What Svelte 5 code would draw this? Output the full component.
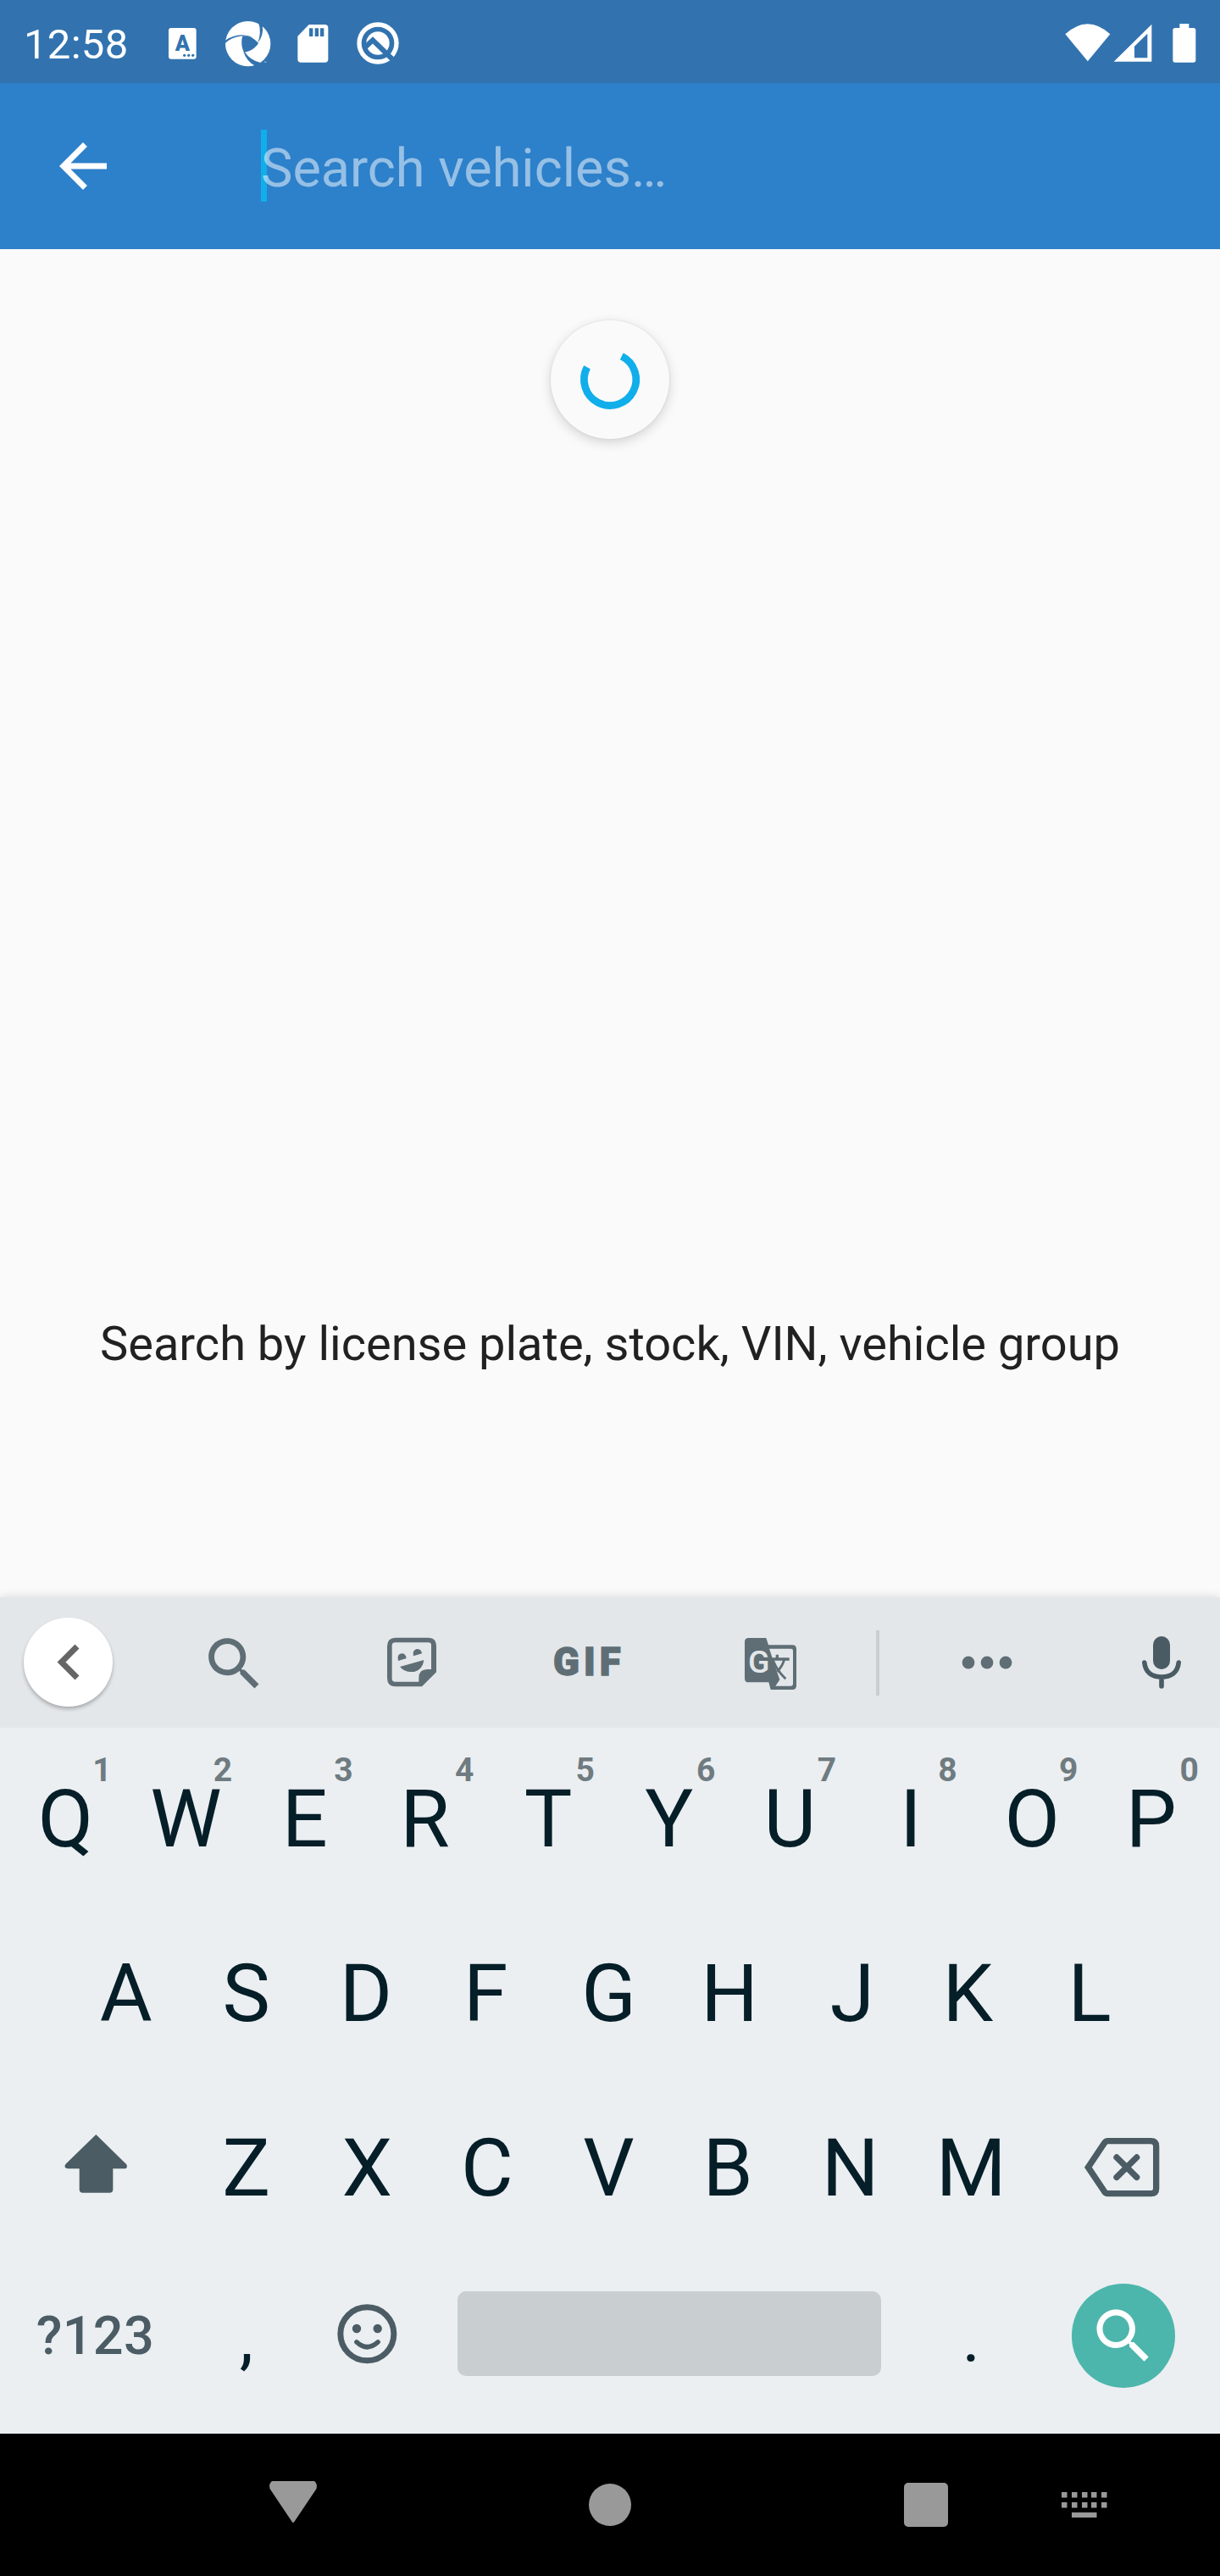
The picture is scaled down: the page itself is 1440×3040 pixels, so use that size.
<script>
  const topRow = ['Q', 'W', 'E', 'R', 'T', 'Y', 'U', 'I', 'O', 'P'];
  const homeRow = ['A', 'S', 'D', 'F', 'G', 'H', 'J', 'K', 'L'];
  const bottomRow = ['Z', 'X', 'C', 'V', 'B', 'N', 'M'];
  const keyDots = [0, 12, 24, 35, 47];
  // Side-bearing compensation (px) so that a letter is centred by its ink.
  const bearing = { Q: -1, E: 4.6, R: 6.4, O: -1, P: 3, A: -1, D: 3, F: 5.4, J: -4.6, K: 8, L: 5.8, C: 2, B: 4 };
</script>

{#snippet letter(k)}<span style:margin-right="{bearing[k] ?? 0}px">{k}</span>{/snippet}

<div class="screen">
  <header class="status">
    <span class="time">12:58</span>
    <svg class="st-input" viewBox="597 87 99 135">
      <rect x="597" y="99" width="98" height="110" rx="9" fill="#fff" />
      <text x="646" y="179" text-anchor="middle" class="badge-letter">A</text>
      <g fill="#3273af"><circle cx="653" cy="196" r="5" /><circle cx="668" cy="196" r="5" /><circle cx="683" cy="196" r="5" /></g>
    </svg>
    <svg class="st-wheel" viewBox="797 74 162 162">
      <circle cx="877" cy="154" r="80" fill="#fff" />
      <g fill="#3273af">
        <path d="M858 126C880 124 898 134 914 152C903 170 885 182 863 184C854 168 852 146 858 126Z" />
        <path d="M796 142Q838 113 884 127L898 136Q870 123 850 127Q818 131 796 152Z" />
        <path d="M915 80Q926 118 911 152Q934 124 928 88Z" />
        <path d="M861 181Q872 218 906 234L922 221Q885 213 865 182Z" />
      </g>
      <text x="934" y="226" class="tm">™</text>
    </svg>
    <svg class="st-sd" viewBox="1053 87 110 135">
      <path fill="#fff" fill-rule="evenodd" d="M1094 87H1150q12 0 12 12V209q0 12-12 12H1066q-12 0-12-12V128ZM1095 100v29h13v-29ZM1115 100v29h13v-29ZM1134 100v29h13v-29Z" />
    </svg>
    <svg class="st-q" viewBox="1264 79 150 150">
      <circle cx="1339" cy="154" r="66" fill="none" stroke="#fff" stroke-width="16" />
      <circle cx="1339" cy="154" r="41" fill="#fff" />
      <path d="M1293 169L1321 143L1400 220" fill="none" stroke="#3273af" stroke-width="18" />
    </svg>
    <svg class="st-signal" viewBox="173 84 464 138">
      <g fill="#fff">
        <path d="M174 121Q253 49 333 121L253.5 217Z" />
        <path fill-rule="evenodd" d="M346 218L480 86V218ZM419 164V205H465V119Z" />
        <path d="M579 84h33v15h16q8 0 8 8v106q0 8-8 8h-65q-8 0-8-8V107q0-8 8-8h16z" />
      </g>
    </svg>
  </header>

  <div class="appbar">
    <svg class="back" viewBox="0 0 24 24"><path fill="#fff" d="M20 11H7.83l5.59-5.59L12 4l-8 8 8 8 1.41-1.41L7.83 13H20z" /></svg>
    <div class="field"><span class="caret"></span><span class="placeholder">Search vehicles…</span></div>
  </div>

  <main class="content">
    <div class="spinner">
      <svg viewBox="-70 -70 140 140"><path d="M13.8 -27.6A30.7 30.7 0 1 1 -27 -14.6" fill="none" stroke="#10aeea" stroke-width="8.75" /></svg>
    </div>
    <p class="message">Search by license plate, stock, VIN, vehicle group</p>
  </main>

  <section class="keyboard">
    <div class="strip">
      <div class="collapse">
        <svg viewBox="-52.5 -52.5 105 105"><path d="M10.5 -18.5L-8 0L10.5 18.5" fill="none" stroke="#666" stroke-width="7" /></svg>
      </div>
      <svg class="find" viewBox="0 0 24 24"><path fill="#5f6e75" d="M15.5 14h-.79l-.28-.27C15.41 12.59 16 11.11 16 9.5 16 5.91 13.09 3 9.5 3S3 5.91 3 9.5 5.91 16 9.5 16c1.61 0 3.09-.59 4.23-1.57l.27.28v.79l5 4.99L20.49 19l-4.99-5zm-6 0C7.01 14 5 11.99 5 9.5S7.01 5 9.5 5 14 7.01 14 9.5 11.99 14 9.5 14z" /></svg>
      <svg class="sticker" viewBox="50 66 174 180">
        <g fill="#5f6e75">
          <path fill-rule="evenodd" d="M80 68H194q30 0 30 30V190L173 241H80q-30 0-30-30V98q0-30 30-30ZM78 85q-11 0-11 11V213q0 11 11 11H162V210q0-30 30-30H206V95q0-10-10-10Z" />
          <path d="M89 150Q83 126 102 124Q116 124 118 141ZM143 133Q138 112 155 108Q171 108 173 124ZM95 171L180 147Q176 180 148 188Q115 194 95 171Z" />
        </g>
      </svg>
      <svg class="gif" viewBox="642 96 243 120"><text y="200"><tspan x="639">G</tspan><tspan x="747">I</tspan><tspan x="803">F</tspan></text></svg>
      <svg class="translate" viewBox="1317 60 183 192">
        <path fill="#5f6e75" d="M1331 69H1393L1401 94H1486q14 0 14 14V238q0 14-14 14H1409L1402 226H1331q-14 0-14-14V83q0-14 14-14Z" />
        <path fill="#e3e7ea" d="M1404 107H1481q7 0 7 7V232q0 7-7 7H1426L1441 217Z" />
        <g fill="none" stroke="#5f6e75" stroke-width="10">
          <path d="M1411 144H1475M1432 128V142" />
          <path d="M1457 146Q1450 170 1432 188M1417 148Q1432 186 1462 214" stroke-width="8.5" />
        </g>
        <text x="1367" y="193" text-anchor="middle">G</text>
      </svg>
      <span class="divider"></span>
      <svg class="more" viewBox="0 0 60 16"><g fill="#5f6e75"><circle cx="8" cy="8" r="7.4" /><circle cx="30" cy="8" r="7.4" /><circle cx="52" cy="8" r="7.4" /></g></svg>
      <svg class="mic" viewBox="0 0 46 64">
        <rect x="13" y="1" width="20" height="39" rx="10" fill="#4a5b63" />
        <path d="M2.8 32C4 44 12 49 23 49S42 44 43.2 32M23 49V60" fill="none" stroke="#4a5b63" stroke-width="5.6" stroke-linecap="round" />
      </svg>
    </div>

    <div class="keys">
      <div class="row">
        {#each topRow as k, i}
          <div class="key">{@render letter(k)}<span class="hint">{(i + 1) % 10}</span></div>
        {/each}
      </div>
      <div class="row">
        {#each homeRow as k}<div class="key">{@render letter(k)}</div>{/each}
      </div>
      <div class="row">
        <div class="key wide">
          <svg class="shift" viewBox="227 178 224 238"><path fill="#4b5c64" d="M339 178L447 284q6 14-9 15H399V372q0 12-12 12H292q-12 0-12-12V299H240q-17-2-9-16Z" /></svg>
        </div>
        {#each bottomRow as k}<div class="key">{@render letter(k)}</div>{/each}
        <div class="key wide">
          <svg class="erase" viewBox="539 186 266 220">
            <g fill="none" stroke="#4b5c64" stroke-width="22">
              <path d="M622 200H774q19 0 19 19V368q0 18-19 18H622q-8 0-13-8L552 293L609 208q5-8 13-8Z" />
              <path d="M653 258L724 328M724 258L653 328" stroke-linecap="round" />
            </g>
          </svg>
        </div>
      </div>
      <div class="row last">
        <div class="key wide mode">?123</div>
        <div class="key punct">,</div>
        <div class="key">
          <svg class="emoji" viewBox="1193 776 212 224">
            <circle cx="1299" cy="882" r="94.5" fill="none" stroke="#4b5c64" stroke-width="21" />
            <circle cx="1262" cy="863" r="15.5" fill="#4b5c64" /><circle cx="1336" cy="863" r="15.5" fill="#4b5c64" />
            <path d="M1262 911Q1299 945 1337 911" fill="none" stroke="#4b5c64" stroke-width="17" stroke-linecap="round" />
          </svg>
        </div>
        <div class="key space"><span class="bar"></span></div>
        <div class="key punct">.</div>
        <div class="key wide">
          <div class="go">
            <svg viewBox="0 0 24 24"><path fill="#fff" d="M15.5 14h-.79l-.28-.27C15.41 12.59 16 11.11 16 9.5 16 5.91 13.09 3 9.5 3S3 5.91 3 9.5 5.91 16 9.5 16c1.61 0 3.09-.59 4.23-1.57l.27.28v.79l5 4.99L20.49 19l-4.99-5zm-6 0C7.01 14 5 11.99 5 9.5S7.01 5 9.5 5 14 7.01 14 9.5 11.99 14 9.5 14z" /></svg>
          </div>
        </div>
      </div>
    </div>
  </section>

  <nav class="nav">
    <svg class="n-back" viewBox="0 0 56 50"><path fill="#999" d="M3 0H53q4 3 2.500 9L30 47q-2 4-4 0L.5 9Q-1 3 3 0Z" /></svg>
    <span class="n-home"></span>
    <span class="n-recent"></span>
    <svg class="n-ime" viewBox="0 0 54 30">
      <g fill="#999">
        {#each keyDots as x}
          <rect {x} y="0" width="6.5" height="6.5" /><rect {x} y="12" width="6.5" height="6.5" />
        {/each}
        <rect x="12" y="24" width="29.5" height="6" />
      </g>
    </svg>
  </nav>
</div>

<style>
  :global(body) { background: #fafafa; }
  svg { display: block; flex: none; overflow: visible; }
  .screen {
    width: 1440px; height: 3040px; overflow: hidden;
    display: flex; flex-direction: column;
    font-family: Roboto, sans-serif; background: #fafafa;
  }

  .status {
    height: 98px; flex: none; box-sizing: border-box; padding: 0 28px;
    display: flex; align-items: center; background: #3273af; color: #fff;
  }
  .time { width: 171px; font-size: 49px; line-height: 58px; letter-spacing: .3px; margin-top: 8px; }
  .st-input { width: 33px; height: 45px; margin-top: 5px; }
  .st-wheel { width: 54px; height: 54px; margin-left: 34px; margin-top: 5px; }
  .st-sd { width: 36.7px; height: 45px; margin-left: 31px; margin-top: 5px; }
  .st-q { width: 50px; height: 50px; margin-left: 33.5px; margin-top: 4px; }
  .st-signal { width: 154.7px; height: 46px; margin-left: auto; margin-top: 4px; }
  .badge-letter { font-size: 76px; font-weight: 900; fill: #3273af; }
  .tm { font-size: 14px; fill: #fff; }

  .appbar {
    height: 196px; flex: none; box-sizing: border-box; padding-left: 56px;
    display: flex; align-items: center; background: #2d80ca;
  }
  .back { width: 84px; height: 84px; }
  .field { position: relative; margin-left: 168px; height: 86px; display: flex; align-items: center; }
  .caret { position: absolute; left: 0; top: 0; width: 7px; height: 85px; background: #10aeea; }
  .placeholder { position: relative; font-size: 63px; line-height: 74px; color: rgba(255, 255, 255, .5); margin-top: 5px; }

  .content {
    height: 1591px; flex: none; box-sizing: border-box; padding-top: 84px;
    display: flex; flex-direction: column; align-items: center;
  }
  .spinner {
    width: 140px; height: 140px; border-radius: 50%; background: #fafafa;
    box-shadow: 0 4px 14px rgba(0, 0, 0, .16), 0 0 3px rgba(0, 0, 0, .08);
  }
  .message { margin: 1035px 0 0; font-size: 56px; line-height: 66px; color: #212121; white-space: nowrap; }

  .keyboard { height: 987px; flex: none; background: #ebeff2; box-shadow: 0 -1px 10px rgba(0, 0, 0, .12); }
  .strip { height: 154px; display: flex; align-items: center; background: #e3e7ea; }
  .collapse {
    width: 105px; height: 105px; margin-left: 28px; margin-bottom: 1px; border-radius: 50%; background: #fff;
    box-shadow: 0 3px 4px rgba(0, 0, 0, .25);
  }
  .find { width: 81.4px; height: 81.4px; margin-left: 103px; margin-top: 3px; }
  .sticker { width: 58px; height: 60px; margin-left: 139.3px; }
  .gif { width: 81px; height: 40px; margin-left: 139.3px; }
  .gif text { font-size: 136px; font-weight: 900; fill: #5f6e75; stroke: #5f6e75; stroke-width: 4; }
  .translate { width: 61px; height: 64px; margin-left: 144px; margin-top: -1px; }
  .translate text { font-size: 112px; font-weight: 500; fill: #e3e7ea; }
  .divider { width: 4px; height: 77px; margin-left: 94px; background: #c9ced1; }
  .more { width: 60px; height: 16px; margin-left: 97.5px; }
  .mic { width: 46px; height: 64px; margin-left: 153px; }

  .keys { padding: 5px 8.5px 0 5.5px; }
  .row { display: flex; justify-content: center; height: 206px; }
  .row.last { height: 189px; }
  .key {
    position: relative; width: 142.6px; flex: none;
    display: flex; align-items: center; justify-content: center;
    font-size: 95px; line-height: 112px; color: #051e28;
  }
  .key.wide { width: 213.9px; }
  .key.space { width: 570.4px; }
  .hint {
    position: absolute; left: 50%; top: 22px; margin-left: 30px; width: 27px; text-align: center;
    font-size: 39px; line-height: 46px; font-weight: 700; color: #6f7b80;
  }
  .key.mode { font-size: 63px; font-weight: 500; color: #4b5c64; letter-spacing: .4px; }
  .key.punct { font-size: 82px; padding-top: 5px; height: 184px; }
  .bar { width: 500px; height: 100px; margin: 0 0 5px 1px; border-radius: 10px; background: #c9ced1; }
  .shift { width: 74.7px; height: 79.3px; margin-left: 2px; }
  .erase { width: 88.7px; height: 73.3px; }
  .emoji { width: 70.7px; height: 74.7px; }
  .go {
    width: 122.6px; height: 122.6px; margin-left: 3px; border-radius: 50%; background: #4db6ac;
    display: flex; align-items: center; justify-content: center;
  }
  .go svg { width: 84px; height: 84px; }

  .nav { height: 168px; flex: none; display: flex; align-items: center; background: #000; }
  .n-back { width: 56px; height: 50px; margin-left: 318px; margin-top: -6px; }
  .n-home { width: 50px; height: 50px; margin-left: 321px; border-radius: 50%; background: #999; }
  .n-recent { width: 52px; height: 52px; margin-left: 322px; border-radius: 5px; background: #999; }
  .n-ime { width: 54px; height: 30px; margin-left: 134px; }
</style>
